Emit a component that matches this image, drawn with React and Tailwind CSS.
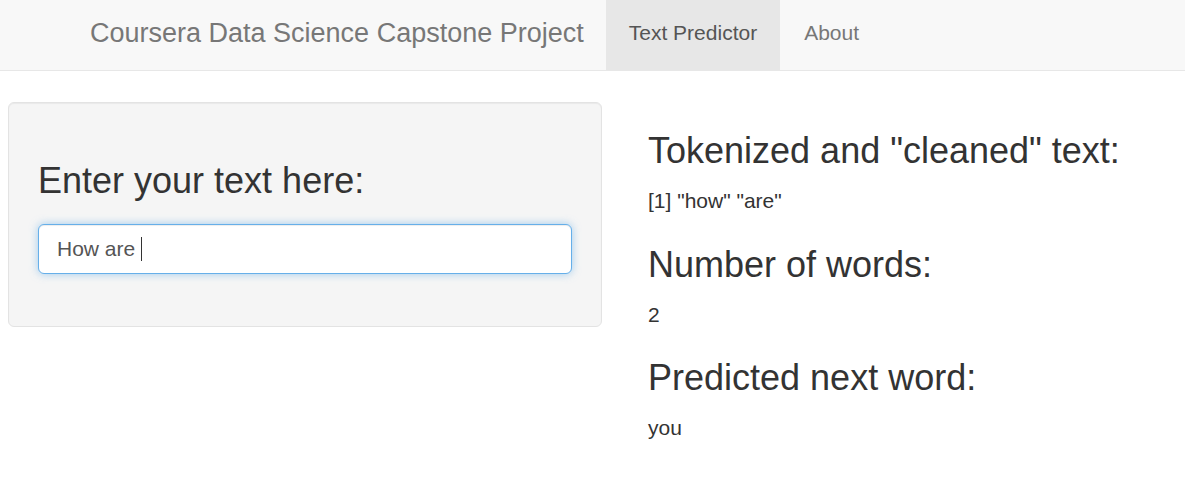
export default function App() {
  return (
    <div className="min-h-[500px] bg-white text-[#333] font-['Liberation_Sans',Arial,sans-serif]">
      <nav className="flex h-[71px] items-stretch border-b border-[#e7e7e7] bg-[#f8f8f8] pl-[90px]">
        <div className="flex items-center pr-[22px] pb-[5px] text-[27px] leading-[30px] text-[#777]">
          Coursera Data Science Capstone Project
        </div>
        <div className="flex items-center bg-[#e7e7e7] px-[23px] pb-[5px] text-[21px] leading-[30px] text-[#555]">
          Text Predictor
        </div>
        <div className="flex items-center px-[24px] pb-[5px] text-[21px] leading-[30px] text-[#777]">
          About
        </div>
      </nav>

      <div className="flex items-start pt-[31px] pl-[8px]">
        <div className="w-[594px] shrink-0 rounded-[6px] border border-[#e3e3e3] bg-[#f5f5f5] px-[29px] pt-[28px] pb-[28px] shadow-[inset_0_1px_1px_rgba(0,0,0,0.05)]">
          <div className="mb-[24px]">
            <h3 className="mt-[30px] mb-[23px] text-[36px] leading-[40px] font-normal">
              Enter your text here:
            </h3>
            <div className="flex h-[50px] items-center rounded-[6px] border border-[#66afe9] bg-white px-[18px] text-[21px] text-[#555] shadow-[inset_0_1px_1px_rgba(0,0,0,0.075),0_0_8px_rgba(102,175,233,0.6)]">
              <span>How are&nbsp;</span>
              <span className="inline-block h-[24px] w-px bg-[#333]" />
            </div>
          </div>
        </div>

        <div className="ml-[46px] flex-1 text-[21px] leading-[30px]">
          <h3 className="mt-[29px] mb-[15px] text-[36px] leading-[40px] font-normal">
            Tokenized and "cleaned" text:
          </h3>
          <div>[1] "how" "are"</div>
          <h3 className="mt-[29px] mb-[15px] text-[36px] leading-[40px] font-normal">
            Number of words:
          </h3>
          <div>2</div>
          <h3 className="mt-[28px] mb-[15px] text-[36px] leading-[40px] font-normal">
            Predicted next word:
          </h3>
          <div>you</div>
        </div>
      </div>
    </div>
  );
}
